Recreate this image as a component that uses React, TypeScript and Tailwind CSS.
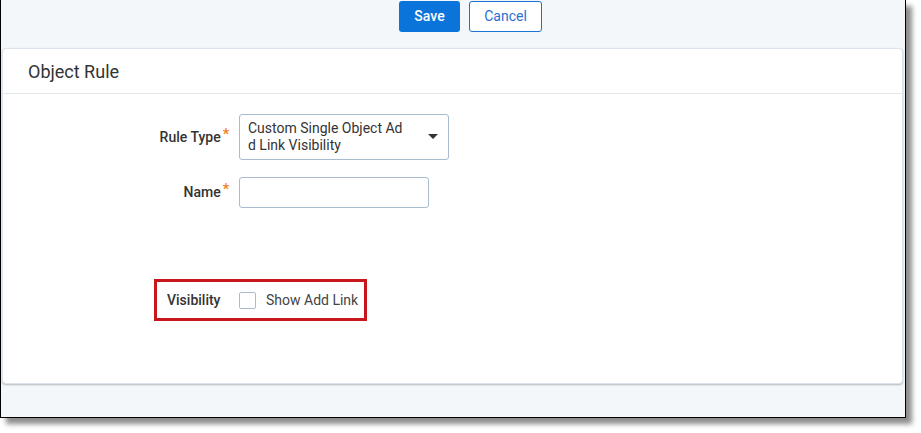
import React from 'react';

const Req = () => <span className="ml-[2px] text-[#f0831e] text-[14px] font-bold relative -top-[3px]">*</span>;

const App: React.FC = () => {
  return (
    <div className="w-[921px] h-[433px] bg-white font-['Roboto','Liberation_Sans',sans-serif] text-[14px] text-[#333]">
      <div className="w-[906px] h-[418px] bg-[#f3f7fa] border-l border-r border-b border-black shadow-[6px_6px_5px_rgba(0,0,0,0.45)] flex flex-col">
        <div className="h-[48px] flex items-start pt-px pl-[398px] gap-[9px]">
          <button className="w-[61px] h-[31px] rounded-[3px] bg-[#0a74da] text-white font-medium">Save</button>
          <button className="w-[73px] h-[31px] rounded-[3px] bg-white border border-[#1a73d4] text-[#2a6fd4]">Cancel</button>
        </div>
        <div className="ml-px w-[901px] h-[336px] bg-white border border-[#dde3ea] rounded-[4px] shadow-[0_1px_2px_rgba(0,0,0,0.25)] flex flex-col">
          <div className="h-[45px] border-b border-[#e3e8ee] flex items-center pl-[25px] text-[18px] text-[#333]">Object Rule</div>
          <div className="pt-[20px] flex flex-col">
            <div className="flex items-center">
              <div className="w-[226px] text-right font-medium">Rule Type<Req /></div>
              <div className="ml-[10px] w-[210px] h-[46px] border border-[#a9bccf] rounded-[3px] flex items-center pl-[8px] pr-[10px]">
                <div className="flex-1 leading-[17px] text-[#333]">Custom Single Object Ad<br />d Link Visibility</div>
                <svg width="10" height="6" viewBox="0 0 10 6"><path d="M0 0h10L5 5z" fill="#333" /></svg>
              </div>
            </div>
            <div className="flex items-center mt-[17px]">
              <div className="w-[226px] text-right font-medium">Name<Req /></div>
              <div className="ml-[10px] w-[190px] h-[31px] border border-[#a9bccf] rounded-[3px]" />
            </div>
            <div className="mt-[71px] ml-[151px] self-start inline-flex items-center h-[42px] border-[3px] border-[#c8161d] pl-[10px] pr-[6px]">
              <span className="font-medium w-[52px]">Visibility</span>
              <span className="ml-[20px] w-[17px] h-[17px] border border-[#a9bccf] rounded-[2px] bg-white" />
              <span className="ml-[10px] text-[#444]">Show Add Link</span>
            </div>
          </div>
        </div>
      </div>
    </div>
  );
};

export default App;
